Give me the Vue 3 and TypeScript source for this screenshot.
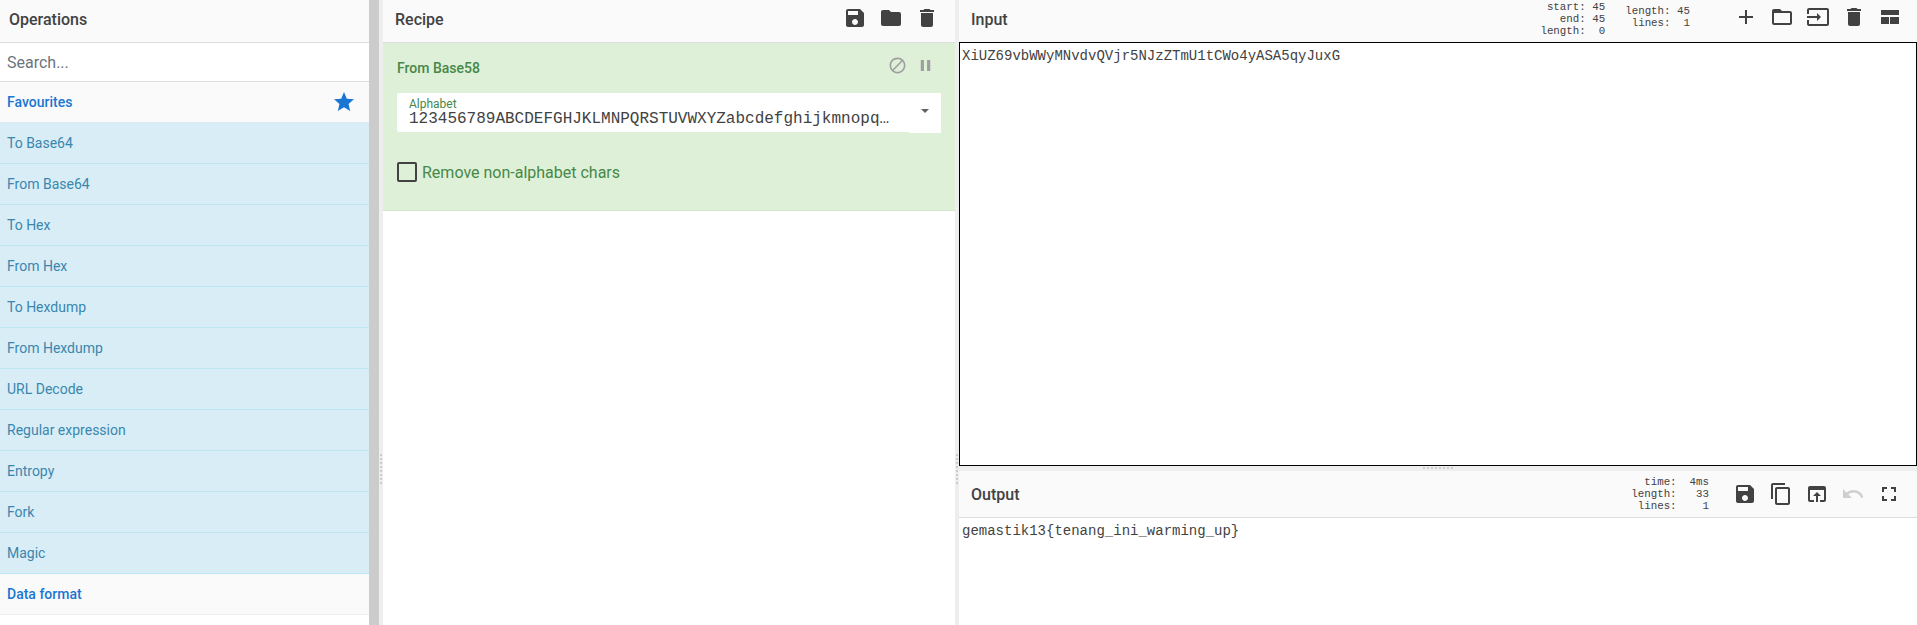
<script setup lang="ts">
const favourites: string[] = ['To Base64', 'From Base64', 'To Hex', 'From Hex', 'To Hexdump', 'From Hexdump', 'URL Decode', 'Regular expression', 'Entropy', 'Fork', 'Magic']
const icons: Record<string, string> = {
  save: 'M17 3H5c-1.11 0-2 .9-2 2v14c0 1.1.89 2 2 2h14c1.1 0 2-.9 2-2V7l-4-4zm-5 16c-1.66 0-3-1.34-3-3s1.34-3 3-3 3 1.34 3 3-1.34 3-3 3zm3-10H5V5h10v4z',
  folder: 'M10 4H4c-1.1 0-1.99.9-1.99 2L2 18c0 1.1.9 2 2 2h16c1.1 0 2-.9 2-2V8c0-1.1-.9-2-2-2h-8l-2-2z',
  del: 'M6 19c0 1.1.9 2 2 2h8c1.1 0 2-.9 2-2V7H6v12zM19 4h-3.500l-1-1h-5l-1 1H5v2h14V4z',
  add: 'M19 13h-6v6h-2v-6H5v-2h6V5h2v6h6v2z',
  folderOpen: 'M20 6h-8l-2-2H4c-1.100 0-1.990.9-1.990 2L2 18c0 1.100.9 2 2 2h16c1.100 0 2-.9 2-2V8c0-1.100-.9-2-2-2zm0 12H4V8h16v10z',
  input: 'M21 3.010H3c-1.100 0-2 .9-2 2V9h2V4.990h18v14.030H3V15H1v4.010c0 1.100.9 1.980 2 1.980h18c1.100 0 2-.88 2-1.980v-14c0-1.110-.9-2-2-2zM11 16l4-4-4-4v3H1v2h10v3z',
  layout: 'M3 5v5h18V5H3zm0 7v7h8v-7H3zm9 0v7h9v-7h-9z',
  copy: 'M16 1H4c-1.100 0-2 .9-2 2v14h2V3h12V1zm3 4H8c-1.100 0-2 .9-2 2v14c0 1.100.9 2 2 2h11c1.100 0 2-.9 2-2V7c0-1.100-.9-2-2-2zm0 16H8V7h11v14z',
  browser: 'M19 4H5c-1.110 0-2 .9-2 2v12c0 1.100.89 2 2 2h4v-2H5V8h14v10h-4v2h4c1.100 0 2-.9 2-2V6c0-1.100-.89-2-2-2zm-7 6l-4 4h3v6h2v-6h3l-4-4z',
  undo: 'M12.500 8c-2.650 0-5.050.99-6.900 2.600L2 7v9h9l-3.620-3.620c1.390-1.160 3.160-1.880 5.120-1.880 3.540 0 6.550 2.310 7.600 5.500l2.370-.78C21.080 11.030 17.150 8 12.500 8z',
  full: 'M7 14H5v5h5v-2H7v-3zm-2-4h2V7h3V5H5v5zm12 7h-3v2h5v-5h-2v3zM14 5v2h3v3h2V5h-5z',
  block: 'M12 2C6.480 2 2 6.480 2 12s4.480 10 10 10 10-4.480 10-10S17.520 2 12 2zM4 12c0-4.420 3.580-8 8-8 1.850 0 3.550.63 4.900 1.690L5.690 16.900C4.630 15.550 4 13.850 4 12zm8 8c-1.850 0-3.550-.63-4.900-1.690L18.310 7.100C19.370 8.450 20 10.150 20 12c0 4.420-3.580 8-8 8z',
  pause: 'M6 19h4V5H6v14zm8-14v14h4V5h-4z',
  star: 'M12 17.270L18.180 21l-1.640-7.030L22 9.240l-7.190-.61L12 2 9.190 8.630 2 9.240l5.460 4.730L5.820 21z'
}
const recipeIcons: string[] = ['save', 'folder', 'del']
const inputIcons: string[] = ['add', 'folderOpen', 'input', 'del', 'layout']
const outputIcons: string[] = ['save', 'copy', 'browser', 'undo', 'full']
</script>

<template>
  <div class="page">
    <aside class="ops">
      <div class="bar ops-title">Operations</div>
      <div class="search">Search...</div>
      <div class="cat first">
        <span>Favourites</span>
        <svg class="star" viewBox="0 0 24 24" width="24" height="24"><path :d="icons.star" /></svg>
      </div>
      <div v-for="f in favourites" :key="f" class="op">{{ f }}</div>
      <div class="cat">Data format</div>
    </aside>
    <div class="scroll"></div>
    <div class="gutter-v"><i class="dots-v"></i></div>
    <section class="recipe">
      <div class="bar recipe-bar">
        <span>Recipe</span>
        <div class="tools">
          <svg v-for="n in recipeIcons" :key="n" viewBox="0 0 24 24" width="24" height="24"><path :d="icons[n]" /></svg>
        </div>
      </div>
      <div class="card">
        <div class="card-head">
          <span class="card-title">From Base58</span>
          <div class="card-tools">
            <svg viewBox="0 0 24 24" width="19" height="19"><path :d="icons.block" /></svg>
            <svg viewBox="0 0 24 24" width="19" height="19"><path :d="icons.pause" /></svg>
          </div>
        </div>
        <div class="field">
          <div class="field-main">
            <div class="field-label">Alphabet</div>
            <div class="field-value">123456789ABCDEFGHJKLMNPQRSTUVWXYZabcdefghijkmnopqrstuvwxyz</div>
          </div>
          <div class="caret-box"><span class="caret"></span></div>
        </div>
        <div class="check">
          <span class="box"></span>
          <span>Remove non-alphabet chars</span>
        </div>
      </div>
    </section>
    <div class="gutter-v"><i class="dots-v"></i></div>
    <section class="io">
      <div class="bar io-bar">
        <span>Input</span>
        <div class="io-right">
          <pre class="stats stats-sel">start: 45
  end: 45
length:  0</pre>
          <pre class="stats stats-in">length: 45
 lines:  1</pre>
          <div class="tools io-tools">
            <svg v-for="n in inputIcons" :key="n" viewBox="0 0 24 24" width="24" height="24"><path :d="icons[n]" /></svg>
          </div>
        </div>
      </div>
      <div class="input-text">XiUZ69vbWWyMNvdvQVjr5NJzZTmU1tCWo4yASA5qyJuxG</div>
      <div class="gutter-h"><i class="dots-h"></i></div>
      <div class="bar io-bar out-bar">
        <span>Output</span>
        <div class="io-right">
          <pre class="stats stats-out">  time:  4ms
length:   33
 lines:    1</pre>
          <div class="tools io-tools out-tools">
            <svg v-for="n in outputIcons" :key="n" :class="{ off: n === 'undo' }" viewBox="0 0 24 24" width="24" height="24"><path :d="icons[n]" /></svg>
          </div>
        </div>
      </div>
      <div class="output-text">gemastik13{tenang_ini_warming_up}</div>
    </section>
  </div>
</template>

<style>
html, body { margin: 0; background: #fff; overflow: hidden; }
</style>

<style scoped>
.page {
  display: flex;
  width: 1917px;
  height: 625px;
  overflow: hidden;
  font-family: Roboto, "Liberation Sans", sans-serif;
  color: #424242;
}
.bar {
  box-sizing: border-box;
  height: 43px;
  padding-bottom: 3px;
  background: #fafafa;
  border-bottom: 1px solid #ddd;
  font-weight: 500;
  font-size: 16px;
  display: flex;
  align-items: center;
  justify-content: space-between;
}
.ops { width: 369px; flex: none; overflow: hidden; }
.ops-title { padding-left: 9px; }
.search {
  box-sizing: border-box;
  height: 39px;
  padding-left: 7px;
  display: flex;
  align-items: center;
  background: #fff;
  border-bottom: 1px solid #ddd;
  font-size: 16px;
  color: #6c757d;
}
.cat {
  box-sizing: border-box;
  height: 41px;
  padding: 0 13px 0 7px;
  background: #fafafa;
  border-bottom: 1px solid #eee;
  color: #1976d2;
  font-weight: 500;
  font-size: 14px;
  display: flex;
  align-items: center;
  justify-content: space-between;
}
.cat.first { border-bottom-color: #d9edf7; }
.star { fill: #1976d2; }
.op {
  box-sizing: border-box;
  height: 41px;
  padding-left: 7px;
  display: flex;
  align-items: center;
  background: #d9edf7;
  border-bottom: 1px solid #bce8f1;
  color: #3a87ad;
  font-size: 14px;
}
.scroll { width: 10px; flex: none; background: #ccc; }
.gutter-v { width: 4px; flex: none; background: #eee; position: relative; }
.dots-v {
  position: absolute;
  left: 1px;
  top: 454px;
  width: 2px;
  height: 30px;
  background: repeating-linear-gradient(to bottom, #ccc 0 2px, transparent 2px 4px);
}
.recipe { width: 572px; flex: none; }
.recipe-bar { padding: 0 16px 3px 12px; }
.tools { display: flex; align-items: center; }
.tools svg { fill: #424242; display: block; }
.recipe-bar .tools { gap: 12px; margin-top: -4px; }
.card {
  box-sizing: border-box;
  height: 168px;
  padding: 0 14px;
  background: #dff0d8;
  border-bottom: 1px solid #d0e6c6;
  color: #468847;
}
.card-head {
  height: 50px;
  display: flex;
  align-items: center;
  justify-content: space-between;
}
.card-title { font-weight: 500; font-size: 14px; margin-top: -1px; }
.card-tools { display: flex; gap: 9px; margin: -5px 6px 0 0; }
.card-tools svg { fill: #9e9e9e; display: block; }
.field {
  box-sizing: border-box;
  height: 39px;
  background: #fff;
  border-radius: 2px;
  display: flex;
}
.field-main { flex: 1; min-width: 0; padding: 5px 16px 0 12px; }
.field-label { font-size: 12px; line-height: 12px; color: #468847; }
.field-value {
  font-family: "Liberation Mono", monospace;
  font-size: 16px;
  line-height: 18px;
  color: #424242;
  white-space: nowrap;
  overflow: hidden;
  text-overflow: ellipsis;
}
.caret-box {
  width: 32px;
  height: 40px;
  flex: none;
  display: flex;
  justify-content: center;
  padding-top: 16px;
  box-sizing: border-box;
  background: #fff;
}
.caret {
  width: 0;
  height: 0;
  border-left: 4px solid transparent;
  border-right: 4px solid transparent;
  border-top: 4px solid #616161;
}
.check {
  display: flex;
  align-items: center;
  gap: 5px;
  margin-top: 30px;
  font-size: 16px;
  color: #468847;
}
.box {
  box-sizing: border-box;
  width: 20px;
  height: 20px;
  border: 2px solid #424242;
  border-radius: 2px;
}
.io { flex: 1; min-width: 0; display: flex; flex-direction: column; }
.io-bar { padding: 0 0 3px 12px; }
.io-right { display: flex; align-items: flex-start; height: 100%; }
.stats {
  margin: 0;
  font-family: "Liberation Mono", monospace;
  font-size: 10.800px;
  line-height: 12px;
  color: #424242;
  font-weight: 400;
  text-align: right;
}
.stats-sel { margin-top: 1px; }
.stats-in { margin: 5px 0 0 20px; text-align: left; white-space: pre; }
.io-tools { gap: 12px; margin: 5px 15px 0 44px; height: 24px; }
.input-text {
  box-sizing: border-box;
  height: 424px;
  border: 1px solid #000;
  margin-top: -1px;
  padding: 5px 2px;
  font-family: "Liberation Mono", monospace;
  font-size: 14px;
  line-height: 16px;
  color: #424242;
}
.gutter-h { height: 5px; background: #eee; position: relative; }
.dots-h {
  position: absolute;
  left: 464px;
  top: 1px;
  width: 30px;
  height: 2px;
  background: repeating-linear-gradient(to right, #ccc 0 2px, transparent 2px 4px);
}
.out-bar { height: 47px; padding-bottom: 0; }
.out-bar .io-right { align-items: center; }
.out-tools { margin: 0 16px 0 24px; gap: 12px; }
.off { fill: #cfcfcf !important; }
.output-text {
  padding: 5px 3px;
  font-family: "Liberation Mono", monospace;
  font-size: 14px;
  line-height: 16px;
  color: #424242;
}
</style>
